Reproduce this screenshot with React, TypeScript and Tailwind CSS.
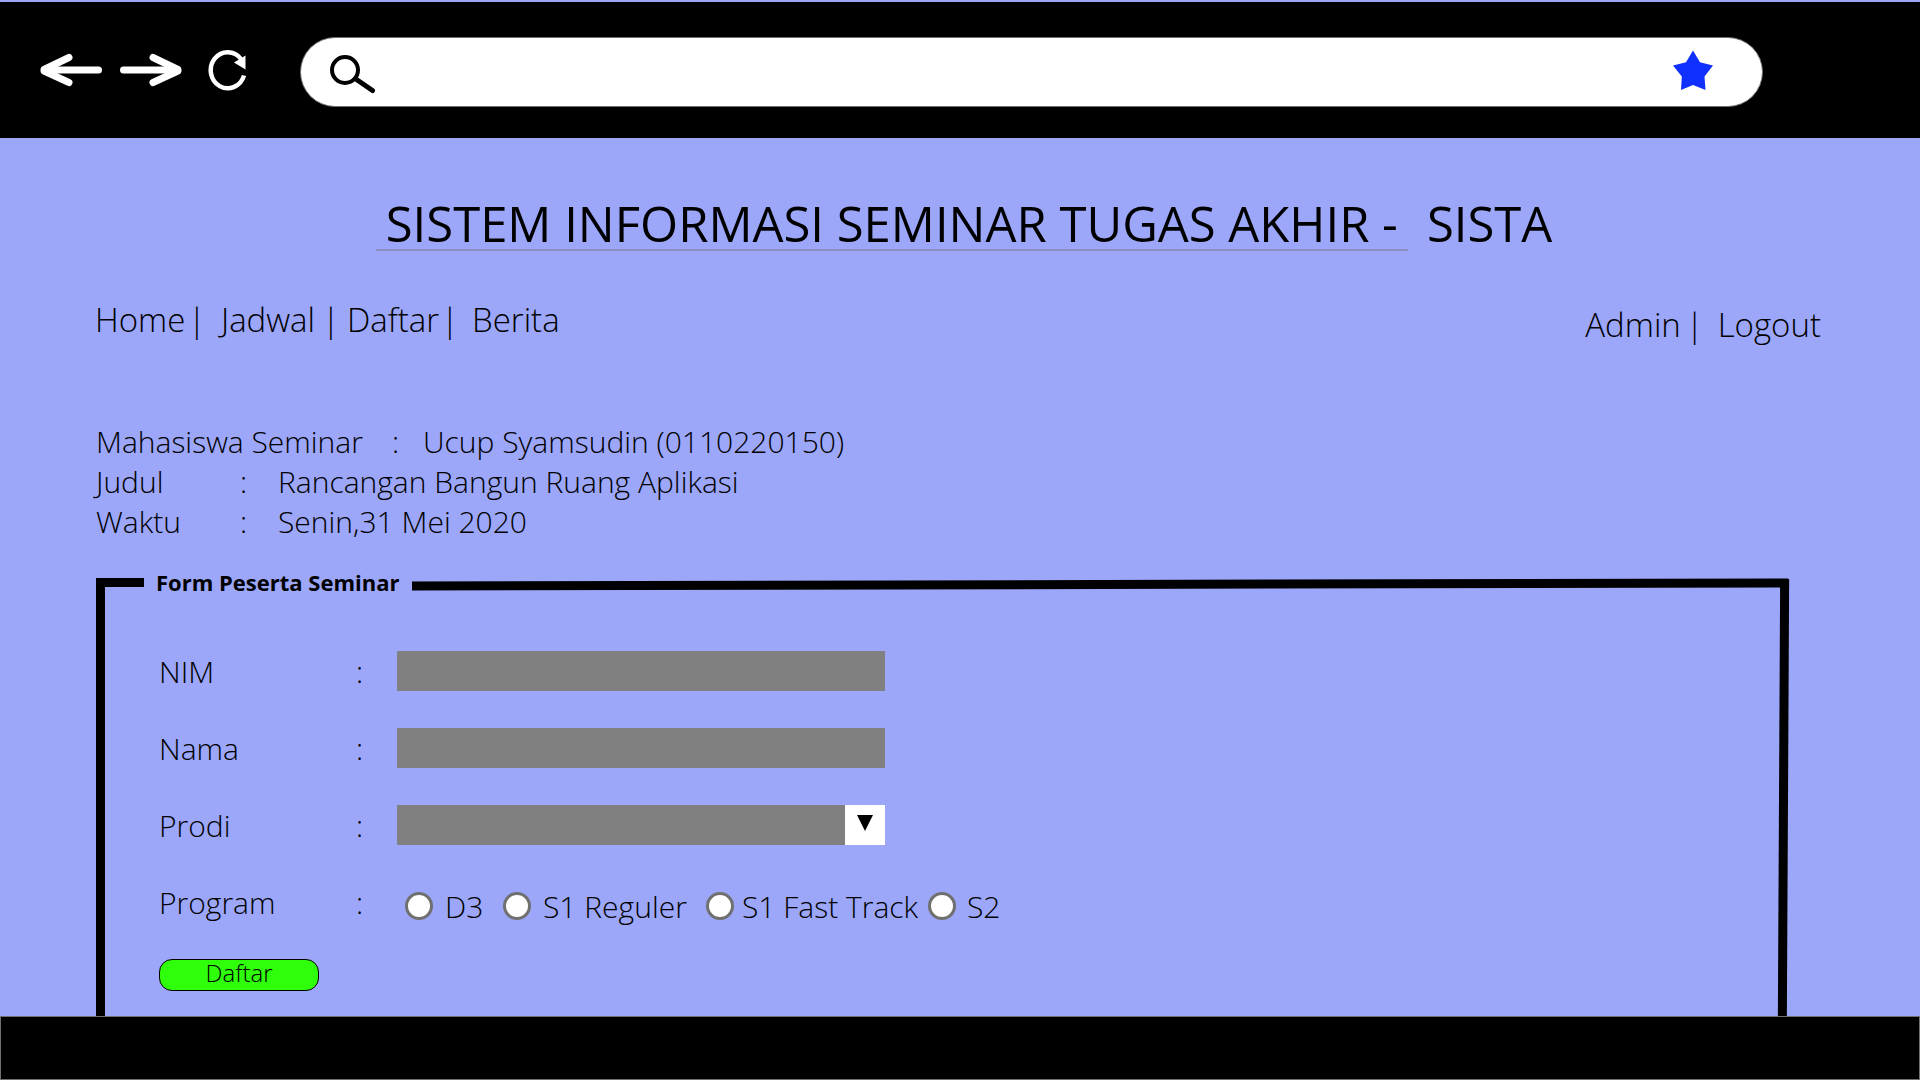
import type { ReactNode } from "react";

function Header() {
  return (
    <header className="flex h-[136px] items-center bg-black pt-1 pr-[157px] pl-[40px]">
      <button type="button" aria-label="Back" className="mr-[18px] mb-1">
        <svg width="62" height="34" viewBox="0 0 62 34" fill="none" stroke="#fff" strokeLinecap="round" strokeLinejoin="round">
          <path d="M5 17H58.500" strokeWidth="7" />
          <path d="M29 4.500L4 16.500V18L29 29.500" strokeWidth="7" />
        </svg>
      </button>
      <button type="button" aria-label="Forward" className="mr-[25px] mb-1">
        <svg width="62" height="34" viewBox="0 0 62 34" fill="none" stroke="#fff" strokeLinecap="round" strokeLinejoin="round">
          <path d="M57 17H3.500" strokeWidth="7" />
          <path d="M33 4.500L58 16.500V18L33 29.500" strokeWidth="7" />
        </svg>
      </button>
      <button type="button" aria-label="Reload" className="mr-[53px] mb-1">
        <svg width="40" height="42" viewBox="0 0 40 42" fill="none">
          <path d="M37 26.500A17 18 0 1 1 34 10" stroke="#fff" strokeWidth="4.500" />
          <path d="M27 13.500L38.500 6.500V20.500Z" fill="#fff" />
        </svg>
      </button>
      <div className="flex h-[70px] flex-1 items-center rounded-full border border-[#707070] bg-white pr-[49px] pl-[29px]">
        <svg className="mt-[5px]" width="46" height="40" viewBox="0 0 46 40" fill="none" stroke="#000" strokeLinecap="round" aria-hidden="true">
          <circle cx="15" cy="15" r="13" strokeWidth="4" />
          <path d="M26.500 24.500L42.500 35.500" strokeWidth="5" />
        </svg>
        <input type="text" aria-label="Address" className="h-full min-w-0 flex-1 bg-transparent px-4 text-[32px] outline-none" />
        <button type="button" aria-label="Bookmark" className="mb-1">
          <svg width="40" height="40" viewBox="0 0 40 40" fill="#1030ff">
            <path d="M20 0.500L27 12.200L40 15.500L31.500 26.500L32.500 40L20 35L8 40L8.800 26.500L0 15.500L13 12.200Z" />
          </svg>
        </button>
      </div>
    </header>
  );
}

function InfoRow({ label, value, className }: { label: string; value: string; className: string }) {
  return (
    <div className={className}>
      <dt>{label}</dt>
      <dd className="contents">
        <span>:</span>
        <span>{value}</span>
      </dd>
    </div>
  );
}

function FormRow({ label, htmlFor, children }: { label: string; htmlFor?: string; children: ReactNode }) {
  return (
    <div className="flex h-10 items-center">
      {htmlFor ? (
        <label htmlFor={htmlFor} className="w-[197px]">
          {label}
        </label>
      ) : (
        <span id="program-label" className="w-[197px]">
          {label}
        </span>
      )}
      <span className="w-[41px]">:</span>
      {children}
    </div>
  );
}

function Option({ label, className }: { label: string; className: string }) {
  return (
    <label className={className}>
      <input
        type="radio"
        name="program"
        className="size-7 appearance-none rounded-full border-[3px] border-[#707070] bg-white checked:bg-[#707070]"
      />
      {label}
    </label>
  );
}

export default function App() {
  return (
    <div className="flex min-h-screen flex-col bg-[#9ca7fa] pt-[2px] font-['Open_Sans','Noto_Sans',sans-serif] text-black">
      <Header />
      <main className="flex flex-1 flex-col">
        <h1 className="mt-[59px] flex justify-center pl-2 text-[49px] leading-[52px] font-normal whitespace-pre">
          <span className="border-b-2 border-[#8d8fc0] px-[10px]">SISTEM INFORMASI SEMINAR TUGAS AKHIR -</span>
          <span className="pl-[19px]">SISTA</span>
        </h1>
        <nav className="mt-[46px] flex items-start justify-between pr-[99px] pl-[95px] text-[33px] leading-[46px] font-light">
          <div className="flex">
            <a href="#home" className="w-[93px]">Home</a>
            <span className="w-[33px]">|</span>
            <a href="#jadwal" className="w-[101px]">Jadwal</a>
            <span className="w-[25px]">|</span>
            <a href="#daftar" className="w-[94px]">Daftar</a>
            <span className="w-[31px]">|</span>
            <a href="#berita">Berita</a>
          </div>
          <div className="mt-[5px] flex">
            <a href="#admin" className="mr-[5px]">Admin</a>
            <span className="mr-[14px]">|</span>
            <a href="#logout">Logout</a>
          </div>
        </nav>
        <dl className="mt-[71px] pl-[96px] text-[30px] font-light">
          <InfoRow label="Mahasiswa Seminar" value="Ucup Syamsudin (0110220150)" className="grid h-10 grid-cols-[296px_31px_auto] items-center" />
          <InfoRow label="Judul" value="Rancangan Bangun Ruang Aplikasi" className="grid h-10 grid-cols-[144px_38px_auto] items-center" />
          <InfoRow label="Waktu" value="Senin,31 Mei 2020" className="grid h-10 grid-cols-[144px_38px_auto] items-center" />
        </dl>
        <form className="mt-[30px] mr-[132px] ml-[96px] flex flex-1 flex-col" aria-labelledby="form-title">
          <div className="flex items-center">
            <div className="mb-[2px] h-[9px] w-[48px] bg-black" />
            <h2 id="form-title" className="pr-[13px] pb-[2px] pl-[12px] text-[22px] leading-[26px] font-bold">
              Form Peserta Seminar
            </h2>
            <div className="mt-[2px] h-[9px] flex-1 -skew-y-[0.13deg] bg-black" />
          </div>
          <div className="-mt-[18px] flex flex-1">
            <div className="w-[9px] bg-black" />
            <div className="flex flex-1 flex-col gap-[37px] pt-[72px] pb-[20px] pl-[54px] text-[30px] font-light">
              <FormRow label="NIM" htmlFor="nim">
                <input id="nim" type="text" className="h-10 w-[488px] bg-[#808080] px-3 outline-none" />
              </FormRow>
              <FormRow label="Nama" htmlFor="nama">
                <input id="nama" type="text" className="h-10 w-[488px] bg-[#808080] px-3 outline-none" />
              </FormRow>
              <FormRow label="Prodi" htmlFor="prodi">
                <div className="grid w-[488px]">
                  <select id="prodi" className="col-start-1 row-start-1 h-10 appearance-none bg-[#808080] px-3 outline-none" />
                  <span className="pointer-events-none col-start-1 row-start-1 flex h-10 w-10 justify-center justify-self-end bg-white pt-[10px]">
                    <svg width="16" height="16" viewBox="0 0 16 16" aria-hidden="true">
                      <path d="M0 0H16L8 16Z" />
                    </svg>
                  </span>
                </div>
              </FormRow>
              <FormRow label="Program">
                <div role="radiogroup" aria-labelledby="program-label" className="mt-2 flex whitespace-nowrap">
                  <Option label="D3" className="ml-2 flex w-[98px] items-center gap-[12px]" />
                  <Option label="S1 Reguler" className="flex w-[203px] items-center gap-[12px]" />
                  <Option label="S1 Fast Track" className="flex w-[222px] items-center gap-[8px]" />
                  <Option label="S2" className="flex items-center gap-[11px]" />
                </div>
              </FormRow>
              <button
                type="submit"
                className="h-8 w-40 rounded-[13px] border border-black bg-[#30ff0c] pb-1 text-[24px] leading-[26px]"
              >
                Daftar
              </button>
            </div>
            <div className="w-[9px] -skew-x-[0.3deg] bg-black" />
          </div>
        </form>
      </main>
      <footer className="h-16 border border-[#707070] bg-black" />
    </div>
  );
}
